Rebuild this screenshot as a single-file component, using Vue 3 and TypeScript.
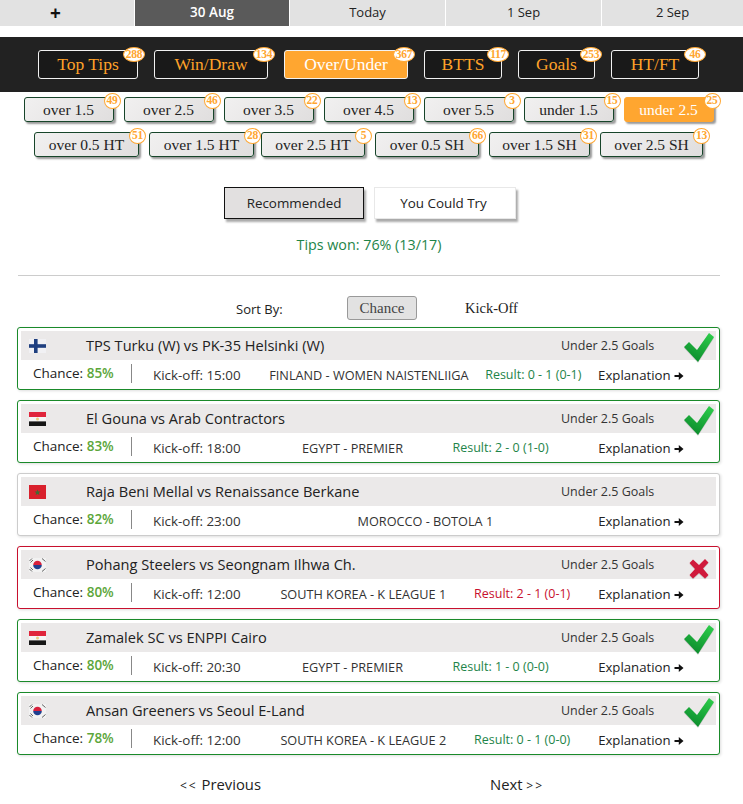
<script setup lang="ts">
type Flag = 'fi' | 'eg' | 'ma' | 'kr'
interface Tip {
  flag: Flag
  title: string
  chance: number
  time: string
  league: string
  result?: string
  state: 'won' | 'lost' | 'none'
}

const days = ['30 Aug', 'Today', '1 Sep', '2 Sep']
const tabs = [
  { label: 'Top Tips', count: 288, w: 100 },
  { label: 'Win/Draw', count: 134, w: 114 },
  { label: 'Over/Under', count: 367, w: 124, active: true },
  { label: 'BTTS', count: 117, w: 78 },
  { label: 'Goals', count: 253, w: 77 },
  { label: 'HT/FT', count: 46, w: 88 },
]
const rowA = [
  { label: 'over 1.5', count: 49, w: 90 },
  { label: 'over 2.5', count: 46, w: 90 },
  { label: 'over 3.5', count: 22, w: 90 },
  { label: 'over 4.5', count: 13, w: 90 },
  { label: 'over 5.5', count: 3, w: 90 },
  { label: 'under 1.5', count: 15, w: 90 },
  { label: 'under 2.5', count: 25, w: 90, active: true },
]
const rowB = [
  { label: 'over 0.5 HT', count: 51, w: 105 },
  { label: 'over 1.5 HT', count: 28, w: 105 },
  { label: 'over 2.5 HT', count: 5, w: 104 },
  { label: 'over 0.5 SH', count: 66, w: 104 },
  { label: 'over 1.5 SH', count: 31, w: 101 },
  { label: 'over 2.5 SH', count: 13, w: 103 },
]
const tips: Tip[] = [
  { flag: 'fi', title: 'TPS Turku (W) vs PK-35 Helsinki (W)', chance: 85, time: '15:00', league: 'FINLAND - WOMEN NAISTENLIIGA', result: '0 - 1 (0-1)', state: 'won' },
  { flag: 'eg', title: 'El Gouna vs Arab Contractors', chance: 83, time: '18:00', league: 'EGYPT - PREMIER', result: '2 - 0 (1-0)', state: 'won' },
  { flag: 'ma', title: 'Raja Beni Mellal vs Renaissance Berkane', chance: 82, time: '23:00', league: 'MOROCCO - BOTOLA 1', state: 'none' },
  { flag: 'kr', title: 'Pohang Steelers vs Seongnam Ilhwa Ch.', chance: 80, time: '12:00', league: 'SOUTH KOREA - K LEAGUE 1', result: '2 - 1 (0-1)', state: 'lost' },
  { flag: 'eg', title: 'Zamalek SC vs ENPPI Cairo', chance: 80, time: '20:30', league: 'EGYPT - PREMIER', result: '1 - 0 (0-0)', state: 'won' },
  { flag: 'kr', title: 'Ansan Greeners vs Seoul E-Land', chance: 78, time: '12:00', league: 'SOUTH KOREA - K LEAGUE 2', result: '0 - 1 (0-0)', state: 'won' },
]
</script>

<template>
  <div class="page">
    <nav class="days">
      <div class="day plus">+</div>
      <div v-for="(d, i) in days" :key="d" class="day" :class="{ current: i === 0 }">{{ d }}</div>
    </nav>

    <div class="tabs">
      <a v-for="t in tabs" :key="t.label" class="tab" :class="{ active: t.active }" :style="{ width: t.w + 'px' }">
        {{ t.label }}<span class="badge">{{ t.count }}</span>
      </a>
    </div>

    <div class="chips row-a">
      <a v-for="c in rowA" :key="c.label" class="chip" :class="{ active: c.active }" :style="{ width: c.w + 'px' }">
        {{ c.label }}<span class="badge small">{{ c.count }}</span>
      </a>
    </div>
    <div class="chips row-b">
      <a v-for="c in rowB" :key="c.label" class="chip" :style="{ width: c.w + 'px' }">
        {{ c.label }}<span class="badge small">{{ c.count }}</span>
      </a>
    </div>

    <div class="modes">
      <button class="mode on">Recommended</button>
      <button class="mode try">You Could Try</button>
    </div>
    <p class="tips-won">Tips won: 76% (13/17)</p>
    <hr class="rule" />

    <div class="sort">
      <span class="sort-label">Sort By:</span>
      <span class="sort-btn">Chance</span>
      <span class="sort-link">Kick-Off</span>
    </div>

    <article v-for="t in tips" :key="t.title" class="card" :class="t.state">
      <header class="head">
        <svg class="flag" viewBox="0 0 17 14" width="17" height="14">
          <template v-if="t.flag === 'fi'">
            <rect width="17" height="14" fill="#f1f1f4" />
            <rect x="5" width="3.6" height="14" fill="#1f3f7f" />
            <rect y="5.200" width="17" height="3.600" fill="#1f3f7f" />
          </template>
          <template v-else-if="t.flag === 'eg'">
            <rect width="17" height="5" fill="#e0263c" />
            <rect y="5" width="17" height="4.400" fill="#f6f6f6" />
            <rect y="9.400" width="17" height="4.600" fill="#161616" />
            <circle cx="8.500" cy="7" r="1.500" fill="#e8cf80" />
          </template>
          <template v-else-if="t.flag === 'ma'">
            <rect width="17" height="14" fill="#d9202c" />
            <path d="M8.500 4.400l.8 2.100 2.200.1-1.700 1.400.6 2.100-1.900-1.200-1.900 1.200.6-2.100-1.700-1.400 2.200-.1z" fill="#3f6b34" />
          </template>
          <template v-else>
            <rect width="17" height="14" fill="#f2f2f2" />
            <path d="M4.200 7a4.300 4.300 0 0 1 8.600 0z" fill="#d8203c" />
            <path d="M4.200 7a4.300 4.300 0 0 0 8.600 0z" fill="#1f3f8f" />
            <path d="M0.500 3l2.500-2.500M1.500 4.500l2.500-2.500M13 0.500l3.500 3M13 13.500l3.500-3M0.500 11l2.500 2.500M1.500 9.500l2.500 2.500" stroke="#666" stroke-width="1" fill="none" />
          </template>
        </svg>
        <span class="title">{{ t.title }}</span>
        <span class="bet">Under 2.5 Goals</span>
      </header>
      <div class="info">
        <span class="chance">Chance: <b>{{ t.chance }}%</b></span>
        <div class="details">
          <span class="kick">Kick-off: {{ t.time }}</span>
          <span class="league">{{ t.league }}</span>
          <span v-if="t.result" class="result">Result: {{ t.result }}</span>
          <span class="explain">Explanation
            <svg class="arrow" viewBox="0 0 10 10" width="10" height="10">
              <path d="M0.500 4h4.300V1l4.700 4-4.700 4V6H0.500z" fill="#111" />
            </svg>
          </span>
        </div>
      </div>
      <svg v-if="t.state === 'won'" class="mark check" viewBox="0 0 30 30" width="30" height="30">
        <defs>
          <linearGradient :id="'g' + t.chance + t.time" x1="0.800" y1="0" x2="0.300" y2="1">
            <stop offset="0" stop-color="#2ccb4a" />
            <stop offset="1" stop-color="#0b8a2c" />
          </linearGradient>
        </defs>
        <path d="M5 9l8 8L25 0l5 4-16 25L0 14z" :fill="`url(#g${t.chance}${t.time})`" />
      </svg>
      <svg v-if="t.state === 'lost'" class="mark cross" viewBox="0 0 20 20" width="20" height="20">
        <path d="M0.500 4L4 0.500l6 5.500 6-6 3.500 3.500-5.500 6 5.500 6.500L16 19.500l-6-5.500-6 5.500-3.500-3.500 5.500-6z" fill="#d01a3c" />
      </svg>
    </article>

    <footer class="pager">
      <a class="prev"><span class="lt">&lt;&lt;</span> Previous</a>
      <a class="next">Next <span class="lt">&gt;&gt;</span></a>
    </footer>
  </div>
</template>

<style scoped>
.page {
  width: 743px;
  font-family: "Open Sans", "Noto Sans", sans-serif;
  color: #222;
}
.days {
  display: grid;
  grid-template-columns: 135px 155px 156px 156px 141px;
  height: 26px;
}
.day {
  box-sizing: border-box;
  height: 26px;
  background: #e2e2e2;
  border-right: 1px solid #fff;
  text-align: center;
  font-size: 13px;
  line-height: 25px;
  color: #222;
}
.day:last-child { border-right: 0; }
.plus {
  padding-right: 23px;
  font-size: 19px;
  font-weight: 700;
  line-height: 26px;
  color: #111;
  border-right: 1px solid #fff;
}
.current {
  background: #5a5a5a;
  color: #fff;
  font-size: 13.5px;
  font-weight: 600;
}
.tabs {
  box-sizing: border-box;
  height: 55px;
  margin-top: 11px;
  padding: 13px 6px 0 0;
  background: #222;
  display: flex;
  justify-content: center;
  align-items: flex-start;
  gap: 16px;
}
.tab {
  position: relative;
  box-sizing: border-box;
  height: 29px;
  border: 1px solid #f2f2f2;
  border-radius: 3px;
  background: #191919;
  color: #ffa229;
  font-family: "Liberation Serif", serif;
  font-size: 17.5px;
  line-height: 27px;
  text-align: center;
  white-space: nowrap;
}
.tab.active {
  background: #ffa630;
  color: #fff;
}
.badge {
  position: absolute;
  top: -4px;
  right: -8px;
  box-sizing: border-box;
  width: 22px;
  height: 15px;
  border-radius: 50%;
  border: 1.500px solid #ffa630;
  background: #fff;
  color: #ffa630;
  font-family: "Liberation Serif", serif;
  font-size: 11.500px;
  font-weight: 700;
  line-height: 12px;
  text-align: center;
  letter-spacing: -0.3px;
}
.badge.small {
  top: -5px;
  right: -8px;
  width: 17px;
  height: 16px;
  line-height: 13px;
}
.chips { display: flex; }
.row-a {
  margin-top: 5px;
  padding-right: 6px;
  justify-content: center;
  gap: 10px;
}
.row-b {
  margin-top: 10px;
  padding-left: 34px;
  gap: 10px;
}
.row-b .chip:nth-child(3) { margin-left: -3px; }
.chip {
  position: relative;
  box-sizing: border-box;
  height: 25px;
  border: 1px solid #17452a;
  border-radius: 3px;
  background: linear-gradient(135deg, #f1f0f0, #e0dede);
  box-shadow: 2px 2px 2px #999;
  font-family: "Liberation Serif", serif;
  font-size: 15.500px;
  line-height: 23px;
  text-align: center;
  color: #222;
  white-space: nowrap;
}
.chip.active {
  background: #ffa630;
  border-color: #ffa630;
  color: #fff;
}
.modes {
  margin-top: 30px;
  padding-right: 3px;
  display: flex;
  justify-content: center;
  gap: 10px;
}
.mode {
  box-sizing: border-box;
  width: 140px;
  height: 32px;
  padding: 0;
  background: #e2e0e0;
  border: 1px solid #111;
  box-shadow: 2px 3px 2px #aaa;
  font-family: "Open Sans", sans-serif;
  font-size: 13.400px;
  font-weight: 500;
  color: #222;
}
.mode.try {
  width: 142px;
  padding-right: 3px;
  background: #fff;
  border-color: #e8e8e8;
}
.tips-won {
  margin: 17px 0 0;
  padding-right: 5px;
  text-align: center;
  font-size: 14.300px;
  line-height: 18px;
  color: #1e8449;
}
.rule {
  margin: 21px 23px 0 18px;
  border: 0;
  border-top: 1px solid #ccc;
}
.sort {
  height: 24px;
  margin-top: 20px;
  padding-left: 236px;
  display: flex;
  align-items: center;
}
.sort-label {
  width: 111px;
  padding-top: 2px;
  font-size: 13px;
  font-weight: 500;
  color: #222;
}
.sort-btn {
  box-sizing: border-box;
  width: 70px;
  height: 24px;
  border: 1px solid #999;
  border-radius: 3px;
  background: #e2e2e2;
  text-align: center;
  font-family: "Liberation Serif", serif;
  font-size: 15px;
  line-height: 22px;
  color: #444;
}
.sort-link {
  margin-left: 48px;
  font-family: "Liberation Serif", serif;
  font-size: 14.500px;
  color: #222;
}
.card {
  position: relative;
  box-sizing: border-box;
  width: 703px;
  height: 63px;
  margin: 0 0 10px 17px;
  padding: 3px;
  border: 1px solid #ccc;
  border-radius: 3px;
  box-shadow: 1px 1px 3px #ddd;
  background: #fff;
}
.sort + .card { margin-top: 7px; }
.card.won { border-color: #1a8a2a; }
.card.lost { border-color: #c8102e; }
.head {
  height: 29px;
  padding-left: 8px;
  background: #ebe9e9;
  display: flex;
  align-items: center;
}
.flag { flex: none; }
.title {
  width: 475px;
  margin-left: 40px;
  font-size: 14.600px;
  line-height: 19px;
  font-weight: 500;
  color: #222;
  white-space: nowrap;
}
.bet {
  font-size: 12.500px;
  color: #333;
  white-space: nowrap;
}
.info {
  height: 27px;
  display: flex;
  align-items: center;
}
.chance {
  box-sizing: border-box;
  width: 111px;
  height: 19px;
  padding-left: 12px;
  border-right: 1px solid #888;
  font-size: 13.500px;
  font-weight: 500;
  line-height: 19px;
  color: #222;
  white-space: nowrap;
}
.chance b {
  font-size: 13.500px;
  font-weight: 600;
  color: #5ca63a;
}
.details {
  width: 531px;
  margin-left: 21px;
  padding-top: 2px;
  display: flex;
  justify-content: space-between;
  align-items: center;
  font-size: 13.200px;
  color: #333;
  white-space: nowrap;
}
.kick { margin-right: 12px; font-size: 13.400px; }
.league { font-size: 12.700px; }
.result { font-size: 12.500px; color: #1e8449; }
.lost .result { color: #c8102e; }
.explain { color: #222; }
.arrow { vertical-align: -1px; }
.mark {
  position: absolute;
  filter: drop-shadow(0 1px 0 rgba(0, 0, 0, 0.15));
}
.check { top: 5px; right: 5px; }
.cross { top: 12px; right: 10px; }
.pager {
  height: 24px;
  margin-top: 19px;
  font-size: 14.800px;
  font-weight: 500;
  color: #222;
  display: flex;
}
.prev { margin-left: 180px; }
.next { margin-left: 229px; }
.lt { font-size: 12px; letter-spacing: 2px; }
</style>

<style>
html, body { margin: 0; background: #fff; }
</style>
